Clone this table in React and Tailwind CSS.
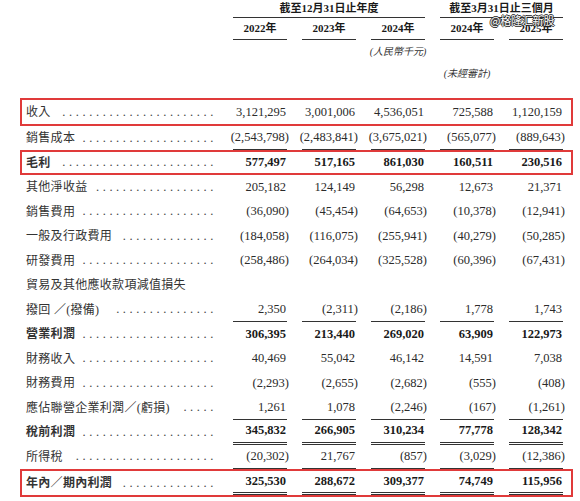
import React from "react";

const rows = [
  { label: "收入", gap: true, box: "h-[28px]", vals: ["3,121,295", "3,001,006", "4,536,051", "725,588", "1,120,159"] },
  { label: "銷售成本", h: "h-[24px]", line: "single", vals: ["(2,543,798)", "(2,483,841)", "(3,675,021)", "(565,077)", "(889,643)"] },
  { label: "毛利", gap: true, bold: true, box: "h-[25px]", vals: ["577,497", "517,165", "861,030", "160,511", "230,516"] },
  { label: "其他淨收益", vals: ["205,182", "124,149", "56,298", "12,673", "21,371"] },
  { label: "銷售費用", vals: ["(36,090)", "(45,454)", "(64,653)", "(10,378)", "(12,941)"] },
  { label: "一般及行政費用", vals: ["(184,058)", "(116,075)", "(255,941)", "(40,279)", "(50,285)"] },
  { label: "研發費用", vals: ["(258,486)", "(264,034)", "(325,528)", "(60,396)", "(67,431)"] },
  { label: "貿易及其他應收款項減值損失", noDots: true, vals: null },
  { label: "撥回 ／(撥備)", indent: true, line: "single", vals: ["2,350", "(2,311)", "(2,186)", "1,778", "1,743"] },
  { label: "營業利潤", bold: true, vals: ["306,395", "213,440", "269,020", "63,909", "122,973"] },
  { label: "財務收入", vals: ["40,469", "55,042", "46,142", "14,591", "7,038"] },
  { label: "財務費用", vals: ["(2,293)", "(2,655)", "(2,682)", "(555)", "(408)"] },
  { label: "應佔聯營企業利潤／(虧損)", gap: true, line: "single", vals: ["1,261", "1,078", "(2,246)", "(167)", "(1,261)"] },
  { label: "稅前利潤", bold: true, line: "double", vals: ["345,832", "266,905", "310,234", "77,778", "128,342"] },
  { label: "所得稅", gap: true, line: "single", vals: ["(20,302)", "21,767", "(857)", "(3,029)", "(12,386)"] },
  { label: "年內／期內利潤", bold: true, box: "h-[28px]", line: "double", vals: ["325,530", "288,672", "309,377", "74,749", "115,956"] },
];

// how many leader dots fit after a label
function dotCount(r) {
  let w = 0;
  for (const ch of r.label) w += /[\x00-\x7f]/.test(ch) ? 4.3 : 12.3;
  const room = 190 - w - (r.indent ? 10 : 0) - (r.gap ? 6 : 2);
  return Math.max(0, Math.floor(room / 6.8));
}

function Num({ v, line }) {
  const neg = v.startsWith("(");
  const lineCls =
    line === "double"
      ? "border-b-[3px] border-double border-[#333]"
      : line === "single"
      ? "border-b border-[#333]"
      : "";
  return (
    <div className="flex justify-end h-full">
      <div className={`w-[54px] h-full flex items-center justify-end whitespace-nowrap ${lineCls}`}>
        {neg ? (
          <span>
            {v.slice(0, -1)}
            <span className="mr-[-2px]">)</span>
          </span>
        ) : (
          <span className="pr-[1px]">{v}</span>
        )}
      </div>
    </div>
  );
}

function Row({ r }) {
  const weight = r.bold ? "font-bold text-[#1a1a1a]" : "font-normal text-[#2b2b2b]";
  const label = (
    <div
      className={`flex items-center min-w-0 pr-[1px] text-[12px] tracking-[0.3px] ${
        r.indent ? "pl-[10px]" : ""
      }`}
    >
      <span className="whitespace-nowrap text-[#333]">{r.label}</span>
      {!r.noDots && (
        <span className="flex-1 text-right whitespace-nowrap text-[12.5px] tracking-[3.6px] font-normal text-[#444]">
          {".".repeat(dotCount(r))}
        </span>
      )}
    </div>
  );
  const nums = r.vals
    ? r.vals.map((v, i) => <Num key={i} v={v} line={r.line} />)
    : null;

  if (r.box) {
    return (
      <div className={`ml-[20px] w-[553px] border-2 border-[#e03a3a] ${r.box} ${weight}`}>
        <div className="grid grid-cols-[196px_repeat(5,69px)] h-full text-[12.5px] [&>div:first-child]:pl-[4px]">
          {label}
          {nums}
        </div>
      </div>
    );
  }
  return (
    <div
      className={`grid grid-cols-[218px_repeat(5,69px)] ${r.h || "h-[24.5px]"} text-[12.5px] ${weight} [&>div:first-child]:pl-[26px]`}
    >
      {label}
      {nums}
    </div>
  );
}

export default function App() {
  return (
    <div
      className="relative w-[580px] h-[501px] bg-white overflow-hidden text-[#2b2b2b]"
      style={{ fontFamily: '"Liberation Serif", "Noto Sans CJK TC", serif' }}
    >
      {/* header */}
      <div className="h-[98px]">
        <div className="grid grid-cols-[218px_repeat(5,69px)] h-[18px] text-[11px] font-bold text-[#1a1a1a]">
          <div />
          <div className="col-span-3 ml-[15px] border-b border-[#333] flex items-center justify-center">
            截至12月31日止年度
          </div>
          <div className="col-span-2 ml-[15px] border-b border-[#333] flex items-center justify-center">
            截至3月31日止三個月
          </div>
        </div>
        <div className="grid grid-cols-[218px_repeat(5,69px)] h-[22px] text-[11px] font-bold text-[#1a1a1a]">
          <div />
          {["2022年", "2023年", "2024年", "2024年", "2025年"].map((y, i) => (
            <div key={i} className="flex justify-end">
              <div className="w-[54px] border-b border-[#333] flex items-center justify-center">{y}</div>
            </div>
          ))}
        </div>
        <div className="grid grid-cols-[218px_repeat(5,69px)] h-[22px] text-[10px] italic text-[#333]">
          <div className="col-span-3" />
          <div className="flex justify-end">
            <div className="w-[54px] flex items-center justify-center whitespace-nowrap">(人民幣千元)</div>
          </div>
        </div>
        <div className="grid grid-cols-[218px_repeat(5,69px)] h-[22px] text-[10px] italic text-[#333]">
          <div className="col-span-4" />
          <div className="flex justify-end">
            <div className="w-[54px] flex items-center justify-center whitespace-nowrap">(未經審計)</div>
          </div>
        </div>
      </div>

      {/* rows */}
      <div className="flex flex-col">
        {rows.map((r, i) => (
          <Row key={i} r={r} />
        ))}
      </div>

      {/* watermark */}
      <div
        className="absolute top-[12px] left-[490px] text-[11px] tracking-[-0.2px] text-white [text-shadow:-1px_0_#222,1px_0_#222,0_-1px_#222,0_1px_#222]"
        style={{ fontFamily: '"Noto Sans CJK SC", sans-serif' }}
      >
        @格隆汇新股
      </div>
    </div>
  );
}
